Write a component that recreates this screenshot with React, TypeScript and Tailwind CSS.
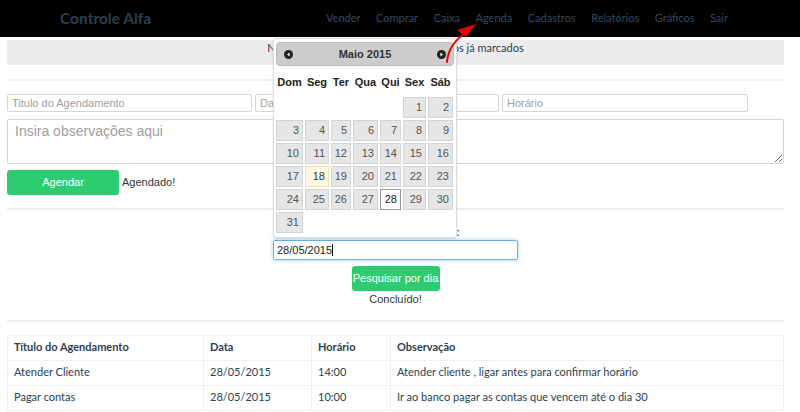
import React from "react";

const lato = { fontFamily: "Lato, 'Open Sans', sans-serif" };
const arial = { fontFamily: "'Liberation Sans', Arial, sans-serif" };

const colW = [27, 24, 20, 25, 21, 23, 25];
const dayNames = ["Dom", "Seg", "Ter", "Qua", "Qui", "Sex", "Sáb"];
const weeks: (number | null)[][] = [
  [null, null, null, null, null, 1, 2],
  [3, 4, 5, 6, 7, 8, 9],
  [10, 11, 12, 13, 14, 15, 16],
  [17, 18, 19, 20, 21, 22, 23],
  [24, 25, 26, 27, 28, 29, 30],
  [31, null, null, null, null, null, null],
];

function Calendar() {
  return (
    <div
      className="absolute left-[273px] top-[38px] w-[184px] h-[200px] bg-white border border-[#dddddd] rounded-[3px] p-[2px] shadow-sm"
      style={arial}
    >
      <div className="h-[24px] mt-[1px] bg-[#cccccc] border border-[#bbbbbb] rounded-[4px] flex items-center justify-between px-[7px]">
        <svg width="9" height="9" viewBox="0 0 10 10">
          <circle cx="5" cy="5" r="5" fill="#222" />
          <path d="M6.2 2.8 L3.4 5 L6.2 7.2 Z" fill="#fff" />
        </svg>
        <span className="text-[11px] font-bold text-[#333]">Maio 2015</span>
        <svg width="9" height="9" viewBox="0 0 10 10">
          <circle cx="5" cy="5" r="5" fill="#222" />
          <path d="M3.8 2.8 L6.6 5 L3.8 7.2 Z" fill="#fff" />
        </svg>
      </div>
      <div className="grid gap-x-[2px] mt-[8px] h-[14px]" style={{ gridTemplateColumns: colW.map((w) => w + "px").join(" ") }}>
        {dayNames.map((d) => (
          <div key={d} className="text-[11px] font-bold text-[#222] text-center whitespace-nowrap flex justify-center">
            {d}
          </div>
        ))}
      </div>
      <div className="grid gap-x-[2px] gap-y-[2px] mt-[9px]" style={{ gridTemplateColumns: colW.map((w) => w + "px").join(" ") }}>
        {weeks.flat().map((n, i) => {
          if (n === null) return <div key={i} className="h-[21px]" />;
          let cls = "bg-[#e6e6e6] border-[#d3d3d3] text-[#555555]";
          if (n === 18) cls = "bg-[#fcf8e3] border-[#f3e3a0] text-[#363636]";
          if (n === 28) cls = "bg-white border-[#999999] text-[#212121]";
          return (
            <div key={i} className={`h-[21px] border flex items-center justify-end pr-[3px] text-[11px] ${cls}`}>
              {n}
            </div>
          );
        })}
      </div>
    </div>
  );
}

function Arrow() {
  return (
    <svg className="absolute left-[440px] top-[20px]" width="45" height="50" viewBox="0 0 45 50">
      <path d="M7 42 C 8 30, 14 20, 27 12" stroke="#e60000" strokeWidth="2" fill="none" strokeLinecap="round" />
      <path d="M17 10 L36 4 L26 17 Z" fill="#e60000" />
    </svg>
  );
}

export default function App() {
  const navItems = ["Vender", "Comprar", "Caixa", "Agenda", "Cadastros", "Relatórios", "Gráficos", "Sair"];
  return (
    <div className="relative w-[800px] h-[412px] overflow-hidden bg-white">
      <div className="h-[37px] bg-black flex items-center" style={lato}>
        <div className="ml-[60px] w-[90px] whitespace-nowrap text-[15.5px] font-bold text-[#2c3e50]">Controle Alfa</div>
        <div className="ml-[176px] flex gap-[15.5px] text-[11px] text-[#34495e]">
          {navItems.map((n) => (
            <span key={n}>{n}</span>
          ))}
        </div>
      </div>

      <div className="ml-[7px] w-[777px]">
        <div className="mt-[3px] h-[25px] bg-[#ececec] text-center text-[11px] text-[#2c3e50] pt-0" style={lato}>
          Nesta página você pode agendar e ver os já marcados
        </div>
        <div className="mt-[14px] border-t-2 border-[#eeeeee]" />

        <div className="mt-[13px] flex gap-[3px]" style={arial}>
          <input className="w-[245px] h-[18px] border border-[#d5d5d5] rounded-[2px] px-[4px] text-[11px] placeholder-[#a0a0a0]" placeholder="Titulo do Agendamento" />
          <input className="w-[244px] h-[18px] border border-[#d5d5d5] rounded-[2px] px-[4px] text-[11px] placeholder-[#a0a0a0]" placeholder="Data" />
          <input className="w-[246px] h-[18px] border border-[#d5d5d5] rounded-[2px] px-[4px] text-[11px] placeholder-[#a0a0a0]" placeholder="Horário" />
        </div>
        <textarea
          className="mt-[7px] block w-[777px] h-[45px] border border-[#d5d5d5] rounded-[2px] px-[7px] py-[1px] text-[14px] placeholder-[#a0a0a0]"
          style={arial}
          placeholder="Insira observações aqui"
        />
        <div className="mt-[6px] flex items-center" style={arial}>
          <div className="w-[112px] h-[25px] bg-[#2ecc71] rounded-[3px] text-white text-[11px] flex items-center justify-center">Agendar</div>
          <span className="ml-[3px] text-[11px] text-[#333]">Agendado!</span>
        </div>
        <div className="mt-[13px] border-t-2 border-[#eeeeee]" />

        <div className="mt-[15px] text-center text-[11.6px] text-[#2c3e50] h-[13px] leading-[13px]" style={lato}>
          Pesquisar agendamentos:
        </div>
        <div className="mt-[2px] flex flex-col items-center" style={arial}>
          <div className="w-[245px] h-[20px] border border-[#66afe9] rounded-[2px] shadow-[0_0_4px_rgba(102,175,233,0.6)] flex items-center px-[3px] text-[11px] text-[#222]">
            28/05/2015<span className="w-px h-[12px] bg-black" />
          </div>
          <div className="mt-[6px] w-[88px] h-[25px] bg-[#2ecc71] rounded-[3px] text-white text-[11px] flex items-center justify-center">Pesquisar por dia</div>
          <div className="mt-0 text-[11px] text-[#333]">Concluído!</div>
        </div>
        <div className="mt-[12px] border-t-2 border-[#eeeeee]" />

        <table className="mt-[13px] w-[777px] border-collapse text-[11px] text-[#2c3e50]" style={lato}>
          <colgroup>
            <col style={{ width: 196 }} />
            <col style={{ width: 108 }} />
            <col style={{ width: 79 }} />
            <col />
          </colgroup>
          <thead>
            <tr className="h-[25px]">
              {["Título do Agendamento", "Data", "Horário", "Observação"].map((h) => (
                <th key={h} className="border border-[#ecf0f1] text-left font-bold px-[6px]">{h}</th>
              ))}
            </tr>
          </thead>
          <tbody>
            <tr className="h-[25px]">
              <td className="border border-[#ecf0f1] px-[6px]">Atender Cliente</td>
              <td className="border border-[#ecf0f1] px-[6px]">28/05/2015</td>
              <td className="border border-[#ecf0f1] px-[6px]">14:00</td>
              <td className="border border-[#ecf0f1] px-[6px]">Atender cliente , ligar antes para confirmar horário</td>
            </tr>
            <tr className="h-[25px]">
              <td className="border border-[#ecf0f1] px-[6px]">Pagar contas</td>
              <td className="border border-[#ecf0f1] px-[6px]">28/05/2015</td>
              <td className="border border-[#ecf0f1] px-[6px]">10:00</td>
              <td className="border border-[#ecf0f1] px-[6px]">Ir ao banco pagar as contas que vencem até o dia 30</td>
            </tr>
          </tbody>
        </table>
      </div>

      <Calendar />
      <Arrow />
    </div>
  );
}
